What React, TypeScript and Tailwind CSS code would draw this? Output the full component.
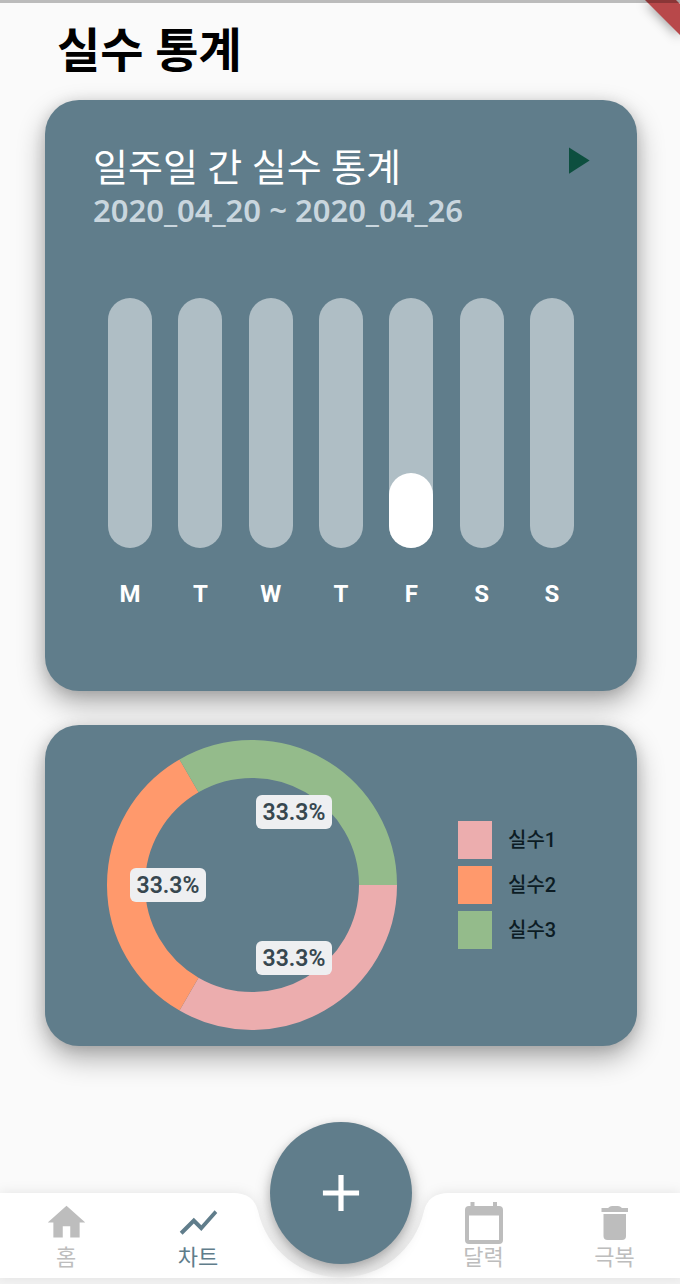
import { MdAdd, MdHome, MdPlayArrow, MdShowChart } from "react-icons/md";
import type { ComponentType } from "react";

const week = [
  { day: "M", value: 0 },
  { day: "T", value: 0 },
  { day: "W", value: 0 },
  { day: "T", value: 0 },
  { day: "F", value: 30 },
  { day: "S", value: 0 },
  { day: "S", value: 0 },
];

const legend = [
  { label: "실수1", color: "bg-[#ecadae]" },
  { label: "실수2", color: "bg-[#ff996c]" },
  { label: "실수3", color: "bg-[#94bb8b]" },
];

const cardClass =
  "rounded-[34px] bg-[#607d8b] shadow-[0_12px_28px_rgba(0,0,0,0.32),0_2px_14px_rgba(0,0,0,0.12)]";

type IconProps = { className?: string };

function CalendarIcon({ className }: IconProps) {
  return (
    <svg viewBox="0 0 45 45" fill="currentColor" className={className}>
      <path
        fillRule="evenodd"
        d="M9.5 2H13.5V6H32V2H36V6H38Q42 6 42 10V40Q42 44 38 44H8Q4 44 4 40V10Q4 6 8 6H9.5ZM8 15.500V40H38V15.500Z"
      />
    </svg>
  );
}

function TrashIcon({ className }: IconProps) {
  return (
    <svg viewBox="0 0 45 45" fill="currentColor" className={className}>
      <path d="M9.500 8H16Q18 6 20 6H26Q28 6 30 8H36V12H9.500Z" />
      <path d="M11.500 14H34V36Q34 40 30 40H15.500Q11.500 40 11.500 36Z" />
    </svg>
  );
}

function WeekCard() {
  return (
    <section className={`${cardClass} px-12 pt-11 pb-[85px]`}>
      <div className="flex items-start justify-between">
        <div>
          <h2 className="text-[38px] leading-[48px] text-white">일주일 간 실수 통계</h2>
          <p className="font-['Noto_Sans','Noto_Sans_CJK_KR',sans-serif] text-[31px] leading-9 font-semibold text-[#c9d6de]">
            2020_04_20 ~ 2020_04_26
          </p>
        </div>
        <button type="button" aria-label="다음" className="-mt-1.5 -mr-2.5 text-[#0d4f3f]">
          <MdPlayArrow className="size-[45px]" />
        </button>
      </div>
      <ul className="mt-[70px] flex justify-between px-[15px]">
        {week.map((d, i) => (
          <li key={i} className="flex flex-col items-center gap-[34px]">
            <div className="flex h-[250px] w-11 flex-col justify-end rounded-full bg-[#afbec5]">
              <div className="rounded-full bg-white" style={{ height: `${d.value}%` }} />
            </div>
            <span className="text-2xl leading-6 font-bold text-white">{d.day}</span>
          </li>
        ))}
      </ul>
    </section>
  );
}

function Percent({ place }: { place: string }) {
  return (
    <span
      className={`absolute flex h-[34px] w-[76px] items-center justify-center rounded-md bg-[#eeeff1] pt-0.5 text-[23px] font-semibold text-[#37474f] ${place}`}
    >
      33.3%
    </span>
  );
}

function RatioCard() {
  return (
    <section className={`${cardClass} flex items-center pt-[15px] pb-4 pl-[62px]`}>
      <div className="relative size-[290px] shrink-0">
        <svg viewBox="-145 -145 290 290" className="size-full" fill="none" strokeWidth="38">
          <path d="M126 0A126 126 0 0 1 -63 109.12" stroke="#ecadae" />
          <path d="M-63 109.12A126 126 0 0 1 -63 -109.12" stroke="#ff996c" />
          <path d="M-63 -109.12A126 126 0 0 1 126 0" stroke="#94bb8b" />
        </svg>
        <Percent place="left-[149px] top-[55px]" />
        <Percent place="left-[23px] top-32" />
        <Percent place="left-[149px] top-[201px]" />
      </div>
      <ul className="ml-[61px] flex flex-col gap-[7px]">
        {legend.map((item) => (
          <li key={item.label} className="flex items-center gap-4">
            <span className={`h-[38px] w-[34px] ${item.color}`} />
            <span className="text-xl font-medium text-[#0c1c24]">{item.label}</span>
          </li>
        ))}
      </ul>
    </section>
  );
}

type TabProps = { icon: ComponentType<IconProps>; label: string; active?: boolean };

function Tab({ icon: Icon, label, active = false }: TabProps) {
  return (
    <a
      href="#"
      aria-current={active ? "page" : undefined}
      className={`flex flex-col items-center pt-[7px] ${active ? "text-[#607d8b]" : "text-[#bdbdbd]"}`}
    >
      <Icon className="size-[45px]" />
      <span className="text-[22px] leading-[26px] font-normal">{label}</span>
    </a>
  );
}

function BottomBar() {
  return (
    <nav className="grid border-b-[6px] border-[#f2f2f2]">
      <div className="col-start-1 row-start-1 flex drop-shadow-[0_-1px_6px_rgba(0,0,0,0.08)]">
        <div className="flex-1 bg-white pl-0.5" />
        <svg viewBox="0 0 240 85" className="h-[85px] w-60" fill="#fff">
          <path d="M0 85V0H12C26 0 34 6 37 18A85 85 0 0 0 203 18C206 6 214 0 228 0H240V85Z" />
        </svg>
        <div className="flex-1 bg-white" />
      </div>
      <div className="relative col-start-1 row-start-1 grid h-[85px] grid-cols-[132fr_132fr_154fr_131fr_131fr]">
        <Tab icon={MdHome} label="홈" />
        <Tab icon={MdShowChart} label="차트" active />
        <button
          type="button"
          aria-label="추가"
          className="-mt-[71px] flex size-[142px] items-center justify-center justify-self-center rounded-full bg-[#607d8b] text-white shadow-[0_8px_16px_rgba(0,0,0,0.28),0_2px_8px_rgba(0,0,0,0.1)]"
        >
          <MdAdd className="size-[62px]" />
        </button>
        <Tab icon={CalendarIcon} label="달력" />
        <Tab icon={TrashIcon} label="극복" />
      </div>
    </nav>
  );
}

export default function App() {
  return (
    <div className="relative flex min-h-screen flex-col overflow-hidden bg-[#fafafa] font-[Roboto,'Noto_Sans_CJK_KR',sans-serif]">
      <svg viewBox="0 0 48 48" className="absolute top-0 right-0 size-12 drop-shadow-[0_2px_6px_rgba(0,0,0,0.4)]">
        <path d="M13 0H44L48 4V35Z" fill="#b8484a" />
      </svg>
      <div className="relative h-[3px] bg-black/25" />
      <main className="flex flex-1 flex-col pr-[43px] pl-[45px]">
        <h1 className="px-3 pt-4 pb-[17px] text-[47px] leading-[64px] font-bold text-black">실수 통계</h1>
        <div className="flex flex-col gap-[34px] pb-[145px]">
          <WeekCard />
          <RatioCard />
        </div>
      </main>
      <BottomBar />
    </div>
  );
}
